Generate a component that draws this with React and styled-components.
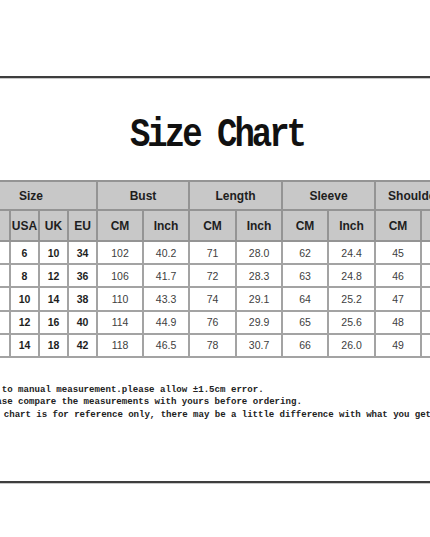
import React from "react";
import styled, { createGlobalStyle } from "styled-components";

const GlobalStyle = createGlobalStyle`
  html, body {
    margin: 0;
    padding: 0;
    background: #ffffff;
    overflow: hidden;
  }
`;

const groups = [
  { label: "Size", span: 4 },
  { label: "Bust", span: 2 },
  { label: "Length", span: 2 },
  { label: "Sleeve", span: 2 },
  { label: "Shoulder", span: 2, shift: true },
];

const units = ["Tag", "USA", "UK", "EU", "CM", "Inch", "CM", "Inch", "CM", "Inch", "CM", "Inch"];

const widths = [45, 29, 29, 29, 46, 46, 47, 46, 46, 47, 46, 47];

const rows = [
  ["S", "6", "10", "34", "102", "40.2", "71", "28.0", "62", "24.4", "45", "17.7"],
  ["M", "8", "12", "36", "106", "41.7", "72", "28.3", "63", "24.8", "46", "18.1"],
  ["L", "10", "14", "38", "110", "43.3", "74", "29.1", "64", "25.2", "47", "18.5"],
  ["XL", "12", "16", "40", "114", "44.9", "76", "29.9", "65", "25.6", "48", "18.9"],
  ["2XL", "14", "18", "42", "118", "46.5", "78", "30.7", "66", "26.0", "49", "19.3"],
];

const notes = [
  "1.Due to manual measurement.please allow \u00b11.5cm error.",
  "2.Please compare the measurements with yours before ordering.",
  "3.This chart is for reference only, there may be a little difference with what you get.",
];

const App = () => {
  return (
    <>
      <GlobalStyle />
      <Page>
        <Rule />
        <TitleBox>
          <Title>Size Chart</Title>
        </TitleBox>
        <Table>
          <colgroup>
            {widths.map((w, i) => (
              <col key={i} style={{ width: w }} />
            ))}
          </colgroup>
          <thead>
            <GroupRow>
              {groups.map((g) => (
                <HeadCell key={g.label} colSpan={g.span} $shift={g.shift}>
                  {g.label}
                </HeadCell>
              ))}
            </GroupRow>
            <UnitRow>
              {units.map((u, i) => (
                <HeadCell key={i}>{u}</HeadCell>
              ))}
            </UnitRow>
          </thead>
          <tbody>
            {rows.map((r) => (
              <DataRow key={r[0]}>
                {r.map((v, i) => (
                  <DataCell key={i} $bold={i < 4}>
                    {v}
                  </DataCell>
                ))}
              </DataRow>
            ))}
          </tbody>
        </Table>
        <Notes>
          {notes.map((n, i) => (
            <NoteLine key={n} $pull={i === 2}>
              {n}
            </NoteLine>
          ))}
        </Notes>
        <Rule />
      </Page>
    </>
  );
};

const Page = styled.div`
  width: 430px;
  height: 537px;
  padding-top: 76px;
  box-sizing: border-box;
  overflow: hidden;
`;

const Rule = styled.div`
  height: 2px;
  width: 100%;
  background-color: #3e3e3e;
  box-shadow: 0 1px 0 #c8c8c8;
`;

const TitleBox = styled.div`
  height: 102px;
  padding-top: 11px;
  box-sizing: border-box;
  display: flex;
  align-items: center;
  justify-content: center;
`;

const Title = styled.div`
  font-family: "Liberation Mono", "Courier New", monospace;
  font-weight: bold;
  font-size: 34px;
  letter-spacing: -3px;
  color: #111;
  transform: scaleY(1.22);
  margin-left: 4px;
`;

const Table = styled.table`
  margin-left: -36px;
  width: 503px;
  table-layout: fixed;
  border-collapse: collapse;
  font-family: "Liberation Sans", Arial, sans-serif;
  color: #2a2a2a;
`;

const GroupRow = styled.tr`
  height: 29px;
  background-color: #c8c8c8;
`;

const UnitRow = styled.tr`
  height: 31px;
  background-color: #c8c8c8;
`;

const DataRow = styled.tr`
  height: 23.2px;
  background-color: #ffffff;
`;

const HeadCell = styled.th`
  border: 2px solid #949494;
  padding: 0;
  font-size: 12px;
  font-weight: bold;
  white-space: nowrap;
  overflow: hidden;
  text-align: ${(p) => (p.$shift ? "left" : "center")};
  padding-left: ${(p) => (p.$shift ? "12px" : "0")};
  color: #1e1e1e;
`;

const DataCell = styled.td`
  border: 2px solid #a3a3a3;
  padding: 0;
  font-size: 10.5px;
  font-weight: ${(p) => (p.$bold ? "bold" : "normal")};
  color: ${(p) => (p.$bold ? "#1e1e1e" : "#404040")};
  text-align: center;
  white-space: nowrap;
  overflow: hidden;
`;

const Notes = styled.div`
  margin-top: 26px;
  margin-left: -31px;
  margin-bottom: 60px;
  font-family: "Liberation Mono", "Courier New", monospace;
  font-weight: bold;
  font-size: 9.1px;
  line-height: 12.5px;
  color: #222;
  white-space: nowrap;
`;

const NoteLine = styled.div`
  margin-left: ${(p) => (p.$pull ? "-3px" : "0")};
  letter-spacing: ${(p) => (p.$pull ? "-0.05px" : "0")};
`;

export default App;
